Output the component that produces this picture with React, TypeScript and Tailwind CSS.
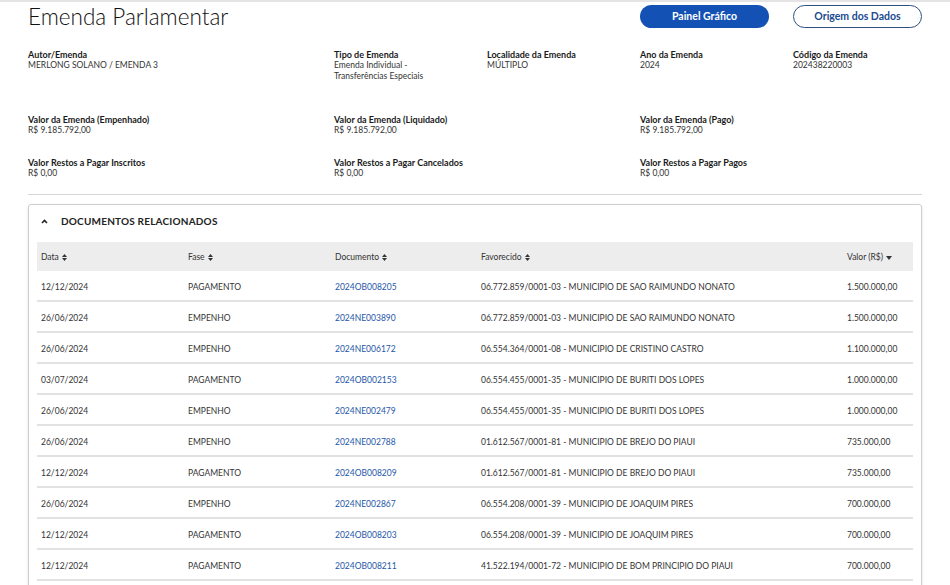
import React from "react";

const rows = [
  ["12/12/2024", "PAGAMENTO", "2024OB008205", "06.772.859/0001-03 - MUNICIPIO DE SAO RAIMUNDO NONATO", "1.500.000,00"],
  ["26/06/2024", "EMPENHO", "2024NE003890", "06.772.859/0001-03 - MUNICIPIO DE SAO RAIMUNDO NONATO", "1.500.000,00"],
  ["26/06/2024", "EMPENHO", "2024NE006172", "06.554.364/0001-08 - MUNICIPIO DE CRISTINO CASTRO", "1.100.000,00"],
  ["03/07/2024", "PAGAMENTO", "2024OB002153", "06.554.455/0001-35 - MUNICIPIO DE BURITI DOS LOPES", "1.000.000,00"],
  ["26/06/2024", "EMPENHO", "2024NE002479", "06.554.455/0001-35 - MUNICIPIO DE BURITI DOS LOPES", "1.000.000,00"],
  ["26/06/2024", "EMPENHO", "2024NE002788", "01.612.567/0001-81 - MUNICIPIO DE BREJO DO PIAUI", "735.000,00"],
  ["12/12/2024", "PAGAMENTO", "2024OB008209", "01.612.567/0001-81 - MUNICIPIO DE BREJO DO PIAUI", "735.000,00"],
  ["26/06/2024", "EMPENHO", "2024NE002867", "06.554.208/0001-39 - MUNICIPIO DE JOAQUIM PIRES", "700.000,00"],
  ["12/12/2024", "PAGAMENTO", "2024OB008203", "06.554.208/0001-39 - MUNICIPIO DE JOAQUIM PIRES", "700.000,00"],
  ["12/12/2024", "PAGAMENTO", "2024OB008211", "41.522.194/0001-72 - MUNICIPIO DE BOM PRINCIPIO DO PIAUI", "700.000,00"],
];

function SortIcon() {
  return (
    <svg width="5" height="7" viewBox="0 0 5 7" className="ml-[3px] inline-block">
      <path d="M0 3 L2.5 0 L5 3 Z" fill="#333" />
      <path d="M0 4 L2.5 7 L5 4 Z" fill="#333" />
    </svg>
  );
}

function SortDown() {
  return (
    <svg width="6" height="4" viewBox="0 0 6 4" className="ml-[3px] inline-block mt-[2px]">
      <path d="M0 0 L6 0 L3 4 Z" fill="#333" />
    </svg>
  );
}

function Field({ label, children, col }: { label: string; children: React.ReactNode; col: string }) {
  return (
    <div className={col}>
      <div className="text-[9px] leading-[11px] font-bold text-[#1a1a1a]">{label}</div>
      <div className="text-[8.5px] leading-[11px] text-[#333]">{children}</div>
    </div>
  );
}

export default function App() {
  return (
    <div className="w-[950px] h-[585px] overflow-hidden bg-white border-t-2 border-[#e4e4e4]" style={{ fontFamily: "Lato, 'Open Sans', sans-serif" }}>
      <div className="flex items-center justify-between px-7 pt-[3px] h-[26px]">
        <h1 className="text-[22.5px] leading-none font-light text-[#111] mt-[1px]">Emenda Parlamentar</h1>
        <div className="flex gap-6">
          <button className="w-[129px] h-[23px] rounded-full bg-[#1351b4] text-white text-[10.5px] font-bold">Painel Gráfico</button>
          <button className="w-[129px] h-[23px] rounded-full border border-[#2f4f80] text-[#1b4a8f] text-[10.5px] font-bold bg-white">Origem dos Dados</button>
        </div>
      </div>

      <div className="px-7">
        <div className="grid grid-cols-6 gap-x-6 mt-[21px]">
          <Field label="Autor/Emenda" col="col-start-1 col-span-2">MERLONG SOLANO / EMENDA 3</Field>
          <Field label="Tipo de Emenda" col="col-start-3">Emenda Individual -<br />Transferências Especiais</Field>
          <Field label="Localidade da Emenda" col="col-start-4">MÚLTIPLO</Field>
          <Field label="Ano da Emenda" col="col-start-5">2024</Field>
          <Field label="Código da Emenda" col="col-start-6">202438220003</Field>
        </div>
        <div className="grid grid-cols-6 gap-x-6 mt-[32px]">
          <Field label="Valor da Emenda (Empenhado)" col="col-start-1 col-span-2">R$ 9.185.792,00</Field>
          <Field label="Valor da Emenda (Liquidado)" col="col-start-3 col-span-2">R$ 9.185.792,00</Field>
          <Field label="Valor da Emenda (Pago)" col="col-start-5 col-span-2">R$ 9.185.792,00</Field>
        </div>
        <div className="grid grid-cols-6 gap-x-6 mt-[21px]">
          <Field label="Valor Restos a Pagar Inscritos" col="col-start-1 col-span-2">R$ 0,00</Field>
          <Field label="Valor Restos a Pagar Cancelados" col="col-start-3 col-span-2">R$ 0,00</Field>
          <Field label="Valor Restos a Pagar Pagos" col="col-start-5 col-span-2">R$ 0,00</Field>
        </div>
        <div className="mt-[15px] border-t border-[#d6d6d6]" />

        <div className="mt-[9px] border border-[#cfcfcf] rounded-[3px] shadow-[0_1px_3px_rgba(0,0,0,0.12)] px-2 pb-[30px]">
          <div className="h-[33px] flex items-center mb-[4px]">
            <svg width="7" height="5" viewBox="0 0 7 5" className="ml-[4px]">
              <path d="M1 4 L3.5 1.5 L6 4" stroke="#222" strokeWidth="1.6" fill="none" />
            </svg>
            <span className="ml-[13px] text-[10px] font-bold tracking-[0.2px] text-[#222]">DOCUMENTOS RELACIONADOS</span>
          </div>
          <div className="grid grid-cols-[147px_147px_146px_366px_1fr] h-[29px] items-center bg-[#ededed] text-[8.5px] text-[#333] pt-[1px]">
            <div className="pl-1 flex items-center">Data<SortIcon /></div>
            <div className="pl-1 flex items-center">Fase<SortIcon /></div>
            <div className="pl-1 flex items-center">Documento<SortIcon /></div>
            <div className="pl-1 flex items-center">Favorecido<SortIcon /></div>
            <div className="pl-1 flex items-center">Valor (R$)<SortDown /></div>
          </div>
          {rows.map((r, i) => (
            <div key={i} className="grid grid-cols-[147px_147px_146px_366px_1fr] h-[31px] items-center border-b-2 border-[#e2e2e2] text-[8.5px] text-[#333] pt-[3px]">
              <div className="pl-1">{r[0]}</div>
              <div className="pl-1">{r[1]}</div>
              <div className="pl-1 text-[#2557a7]">{r[2]}</div>
              <div className="pl-1">{r[3]}</div>
              <div className="pl-1">{r[4]}</div>
            </div>
          ))}
        </div>
      </div>
    </div>
  );
}
